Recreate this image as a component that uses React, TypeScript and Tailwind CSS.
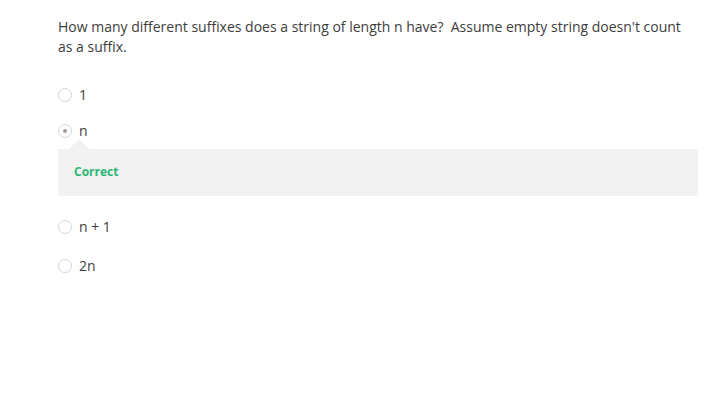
import React from "react";

function Radio({ checked }: { checked?: boolean }) {
  return (
    <span className="flex h-[14px] w-[14px] shrink-0 items-center justify-center rounded-full border border-[#d6d6d6] bg-white">
      {checked && <span className="h-[4px] w-[4px] rounded-full bg-[#9a9a9a]" />}
    </span>
  );
}

function Option({ label, checked }: { label: string; checked?: boolean }) {
  return (
    <label className="flex h-[20px] items-center gap-[7px] text-[14px] text-[#3d3d3d]">
      <Radio checked={checked} />
      <span className="leading-[20px]">{label}</span>
    </label>
  );
}

export default function App() {
  return (
    <div className="min-h-[419px] w-full bg-white" style={{ fontFamily: '"Open Sans", "Liberation Sans", sans-serif' }}>
      <div className="ml-[58px] w-[640px] pt-[17px]">
        <p className="text-[14px] leading-[20px] text-[#3d3d3d]">
          How many different suffixes does a string of length n have?&nbsp; Assume empty string doesn't count as a suffix.
        </p>
        <div className="mt-[28px] flex flex-col">
          <Option label="1" />
          <div className="mt-[16px]">
            <Option label="n" checked />
          </div>
          <div className="relative mt-[8px] flex h-[47px] items-center bg-[#f1f1f1] px-[16px] pb-[2px]">
            <span className="absolute left-[11px] top-[-10px] h-0 w-0 border-x-[10px] border-b-[10px] border-x-transparent border-b-[#f1f1f1]" />
            <span className="text-[12px] font-bold text-[#2bb673]">Correct</span>
          </div>
          <div className="mt-[21px]">
            <Option label="n + 1" />
          </div>
          <div className="mt-[19px]">
            <Option label="2n" />
          </div>
        </div>
      </div>
    </div>
  );
}
